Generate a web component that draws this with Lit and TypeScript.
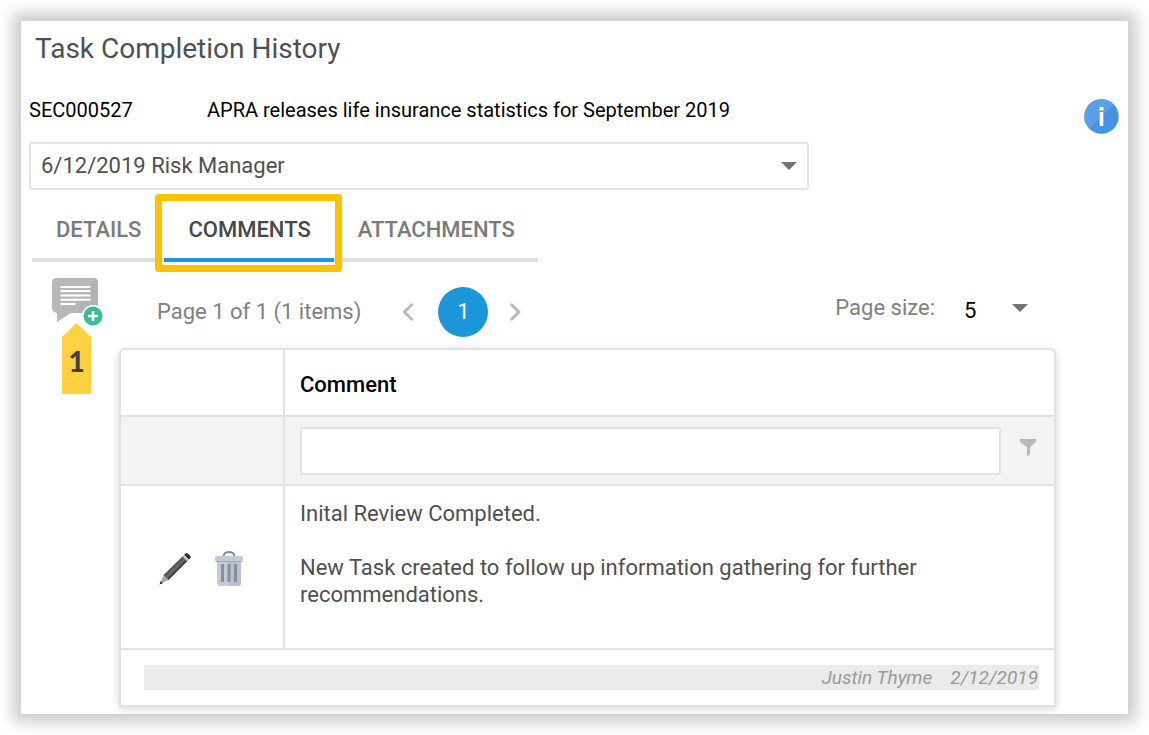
import { LitElement, html, css } from "lit";
import { customElement, state } from "lit/decorators.js";

interface CommentEntry {
  text: string;
  author: string;
  date: string;
}

const arrow = html`<svg class="arrow" viewBox="0 0 16 8" aria-hidden="true">
  <path d="M0 0h16L8 8z" fill="#727272" />
</svg>`;

@customElement("app-root")
export class AppRoot extends LitElement {
  static styles = css`
    :host {
      display: block;
      padding: 21px;
      background: #fff;
      color: #4f4f4f;
      font: 22px/26px Roboto, "Liberation Sans", sans-serif;
    }
    * {
      box-sizing: border-box;
    }
    button,
    input,
    select {
      font: inherit;
      color: inherit;
      margin: 0;
      padding: 0;
      border: 0;
      background: none;
      border-radius: 0;
    }
    .panel {
      background: #fff;
      box-shadow: 0 0 14px 8px #cbcbcb;
      padding: 8px 8px 7px;
    }
    h1 {
      margin: 0;
      padding: 4px 6px;
      font-size: 28px;
      line-height: 32px;
      font-weight: 400;
      color: #505050;
    }
    .summary {
      display: flex;
      justify-content: space-between;
      margin-top: 25px;
      height: 48px;
      font-size: 20px;
      color: #000;
    }
    .summary-text {
      display: flex;
      padding-top: 3px;
    }
    .code {
      width: 178px;
    }
    .info {
      width: 36px;
      height: 36px;
      margin-top: 4px;
    }
    .info svg {
      display: block;
      width: 36px;
      height: 36px;
    }
    .combo {
      display: grid;
      align-items: center;
      max-width: 780px;
    }
    .combo select,
    .combo .arrow {
      grid-area: 1 / 1;
    }
    .arrow {
      width: 16px;
      height: 8px;
      pointer-events: none;
    }
    .combo .arrow {
      justify-self: end;
      margin-right: 12px;
    }
    select {
      appearance: none;
      width: 100%;
    }
    .combo select {
      height: 48px;
      padding: 0 36px 0 10px;
      border: 2px solid #e4e4e4;
      border-radius: 3px;
    }
    .tabs {
      display: flex;
      margin: 5px 0 0 3px;
    }
    .tab {
      position: relative;
      height: 67px;
      padding: 6px 23px 0 24px;
      border-bottom: 4px solid #dedede;
      font-weight: 500;
      color: #7b7b7b;
    }
    .tab.active {
      z-index: 1;
      color: #484848;
      border-color: #1b96d8;
    }
    .tab.active::after {
      content: "";
      position: absolute;
      inset: -1px -8px -14px -9px;
      border: 7px solid #ffc000;
      border-radius: 4px;
    }
    .body {
      display: flex;
      padding-top: 15px;
    }
    .side {
      width: 90px;
      padding-left: 23px;
    }
    .add {
      position: relative;
      display: block;
      width: 51px;
      height: 49px;
    }
    .add svg {
      display: block;
      width: 51px;
      height: 49px;
    }
    .marker {
      position: absolute;
      top: 46px;
      left: 10px;
      width: 29px;
      height: 71px;
      padding-top: 22px;
      background: #ffd03f;
      clip-path: polygon(50% 0, 100% 14px, 100% 100%, 0 100%, 0 14px);
      font: 900 28px/32px Lato, "Open Sans", sans-serif;
      color: #404040;
      text-align: center;
    }
    .main {
      flex: 1;
      min-width: 0;
      margin-right: 64px;
    }
    .pager {
      display: flex;
      align-items: center;
      height: 71px;
      padding: 0 28px 2px 38px;
      color: #808080;
    }
    .pages {
      display: flex;
      align-items: center;
      gap: 22px;
      margin-left: 41px;
    }
    .step {
      width: 14px;
      height: 20px;
    }
    .step svg {
      display: block;
      width: 14px;
      height: 20px;
    }
    .current {
      width: 50px;
      height: 50px;
      border-radius: 50%;
      background: #1b96d8;
      color: #fff;
    }
    .size {
      display: flex;
      align-items: center;
      margin-left: auto;
      padding-bottom: 8px;
    }
    .size-field {
      display: grid;
      align-items: center;
      width: 64px;
      margin-left: 29px;
      color: #000;
    }
    .size-field select,
    .size-field .arrow {
      grid-area: 1 / 1;
    }
    .size-field select {
      padding-top: 6px;
    }
    .size-field .arrow {
      justify-self: end;
    }
    table {
      width: 100%;
      table-layout: fixed;
      border-spacing: 0;
      border: 2px solid #e2e2e2;
      border-radius: 6px 6px 0 0;
      box-shadow: 0 2px 8px rgba(0, 0, 0, 0.16);
    }
    th,
    td {
      padding: 0 15px;
      border-bottom: 2px solid #e2e2e2;
      text-align: left;
      font-weight: 400;
    }
    .tools-col {
      width: 164px;
    }
    .tools-cell {
      border-right: 2px solid #e2e2e2;
    }
    .head th {
      height: 67px;
      padding-top: 4px;
      font-weight: 500;
      color: #000;
    }
    .filter td {
      height: 69px;
      padding-right: 17px;
      background: #f3f3f3;
    }
    .filter-line {
      display: flex;
      align-items: center;
      gap: 18px;
    }
    .filter input {
      flex: 1;
      min-width: 0;
      height: 48px;
      padding: 0 10px;
      border: 2px solid #e2e2e2;
      border-radius: 3px;
      background: #fff;
    }
    .filter svg {
      display: block;
      width: 18px;
      height: 20px;
      margin-bottom: 6px;
    }
    .entry td {
      height: 164px;
      vertical-align: top;
    }
    .entry td.tools-cell {
      vertical-align: middle;
    }
    .tools {
      display: flex;
      gap: 22px;
      padding: 2px 0 0 23px;
    }
    .tools button,
    .tools svg {
      display: block;
      width: 32px;
      height: 36px;
    }
    .text {
      margin: 0;
      padding-top: 14px;
      line-height: 27px;
      white-space: pre-line;
    }
    .signed td {
      height: 55px;
      padding: 0 15px 0 23px;
      border-bottom: 0;
    }
    .signature {
      display: flex;
      justify-content: flex-end;
      gap: 18px;
      padding-right: 1px;
      background: #ebebeb;
      font-size: 19px;
      line-height: 25px;
      font-style: italic;
      color: #9a9a9a;
    }
  `;

  @state() private tab = "COMMENTS";

  private tabs = ["DETAILS", "COMMENTS", "ATTACHMENTS"];

  private entries: CommentEntry[] = [
    {
      text: "Inital Review Completed.\n\nNew Task created to follow up information gathering for further recommendations.",
      author: "Justin Thyme",
      date: "2/12/2019",
    },
  ];

  private renderEntry(e: CommentEntry) {
    return html`
      <tr class="entry">
        <td class="tools-cell">
          <div class="tools">
            <button aria-label="Edit">
              <svg viewBox="0 0 32 36">
                <path d="M1 34l3.500-9 5 5z" fill="#a9a9a9" />
                <path d="M.5 34.500l1.200-3.500 2.300 2.300z" fill="#333" />
                <path d="M4.500 25L24 6l4.500 4.500L9.500 30z" fill="#565656" />
                <path d="M7 27.500L26 8.500" stroke="#747474" stroke-width="1.300" />
                <path d="M9 29.500L28 10.500" stroke="#3c3c3c" stroke-width="1.300" />
                <path d="M23.500 6.500l2-2 5 5-2 2z" fill="#ccc" />
                <path d="M25.300 4.700l1.200-1.200q1.300-1 2.600 .2l2 2q1.300 1.300 .2 2.600L30 9.500z" fill="#292929" />
              </svg>
            </button>
            <button aria-label="Delete">
              <svg viewBox="0 0 32 36">
                <path d="M10.500 7q0-5 5.500-5t5.500 5" fill="none" stroke="#848b92" stroke-width="2" />
                <path d="M4 10h24v23q0 3-3 3H7q-3 0-3-3z" fill="#c3c9d7" />
                <path d="M16 10h12v23q0 3-3 3h-9z" fill="#bac1d0" />
                <path d="M2 8q0-2 2-2h24q2 0 2 2v3H2z" fill="#c5cad8" />
                <path d="M3 11.500h26" stroke="#a2a9b8" />
                <path d="M9.500 14v18M16 14v18M22.500 14v18" stroke="#868e98" stroke-width="3" />
              </svg>
            </button>
          </div>
        </td>
        <td><p class="text">${e.text}</p></td>
      </tr>
      <tr class="signed">
        <td colspan="2">
          <div class="signature"><span>${e.author}</span><span>${e.date}</span></div>
        </td>
      </tr>
    `;
  }

  render() {
    return html`
      <main class="panel">
        <h1>Task Completion History</h1>
        <div class="summary">
          <div class="summary-text">
            <span class="code">SEC000527</span>
            <span>APRA releases life insurance statistics for September 2019</span>
          </div>
          <button class="info" aria-label="Information">
            <svg viewBox="0 0 36 36">
              <circle cx="17.500" cy="18.500" r="17.200" fill="#4593e5" />
              <path d="M5.300 30.700A17.200 17.200 0 0 1 29.700 6.300z" fill="#5d9fe5" />
              <rect x="15.500" y="9" width="4" height="3.600" rx=".5" fill="#fff" />
              <rect x="15.700" y="14" width="3.600" height="14" rx=".5" fill="#fff" />
            </svg>
          </button>
        </div>
        <div class="combo">
          <select aria-label="Task">
            <option>6/12/2019 Risk Manager</option>
          </select>
          ${arrow}
        </div>
        <div class="tabs" role="tablist">
          ${this.tabs.map(
            (t) => html`<button
              role="tab"
              class="tab ${t === this.tab ? "active" : ""}"
              aria-selected=${t === this.tab}
              @click=${() => (this.tab = t)}
            >${t}</button>`
          )}
        </div>
        <div class="body">
          <div class="side">
            <button class="add" aria-label="Add comment">
              <svg viewBox="0 0 51 49">
                <path d="M5 1h36q5 0 5 5v25q0 5-5 5H19L5 45v-9q-5-1-5-5V6q0-5 5-5z" fill="#b8b8b8" />
                <path d="M46 6v25q0 5-5 5H24L42 1q4 0 4 5z" fill="#b2b2b2" />
                <path d="M8.500 10h30M8.500 14h30M8.500 18.500h30M8.500 22.700h30M8.500 27h15" stroke="#fff" stroke-width="2" />
                <circle cx="41" cy="39" r="11" fill="#fff" />
                <circle cx="41" cy="39" r="9.500" fill="#37bd9c" />
                <path d="M36 39h10M41 34v10" stroke="#fff" stroke-width="2.500" />
              </svg>
              <span class="marker">1</span>
            </button>
          </div>
          <div class="main">
            <div class="pager">
              <span>Page 1 of 1 (1 items)</span>
              <div class="pages">
                <button class="step" aria-label="Previous page">
                  <svg viewBox="0 0 14 20">
                    <path d="M10.500 2L2.500 10l8 8" fill="none" stroke="#b9b9b9" stroke-width="3" />
                  </svg>
                </button>
                <button class="current">1</button>
                <button class="step" aria-label="Next page">
                  <svg viewBox="0 0 14 20">
                    <path d="M.8 2L8.800 10l-8 8" fill="none" stroke="#b9b9b9" stroke-width="3" />
                  </svg>
                </button>
              </div>
              <div class="size">
                <label for="size">Page size:</label>
                <div class="size-field">
                  <select id="size"><option>5</option></select>
                  ${arrow}
                </div>
              </div>
            </div>
            <table>
              <colgroup><col class="tools-col" /><col /></colgroup>
              <thead>
                <tr class="head">
                  <th class="tools-cell"></th>
                  <th>Comment</th>
                </tr>
                <tr class="filter">
                  <td class="tools-cell"></td>
                  <td>
                    <div class="filter-line">
                      <input type="text" aria-label="Filter comments" />
                      <svg viewBox="0 0 18 20" aria-hidden="true">
                        <path d="M1 1h16v3l-6 5v7l-3 3V9L1 4z" fill="#b9b9b9" />
                      </svg>
                    </div>
                  </td>
                </tr>
              </thead>
              <tbody>
                ${this.entries.map((e) => this.renderEntry(e))}
              </tbody>
            </table>
          </div>
        </div>
      </main>
    `;
  }
}
